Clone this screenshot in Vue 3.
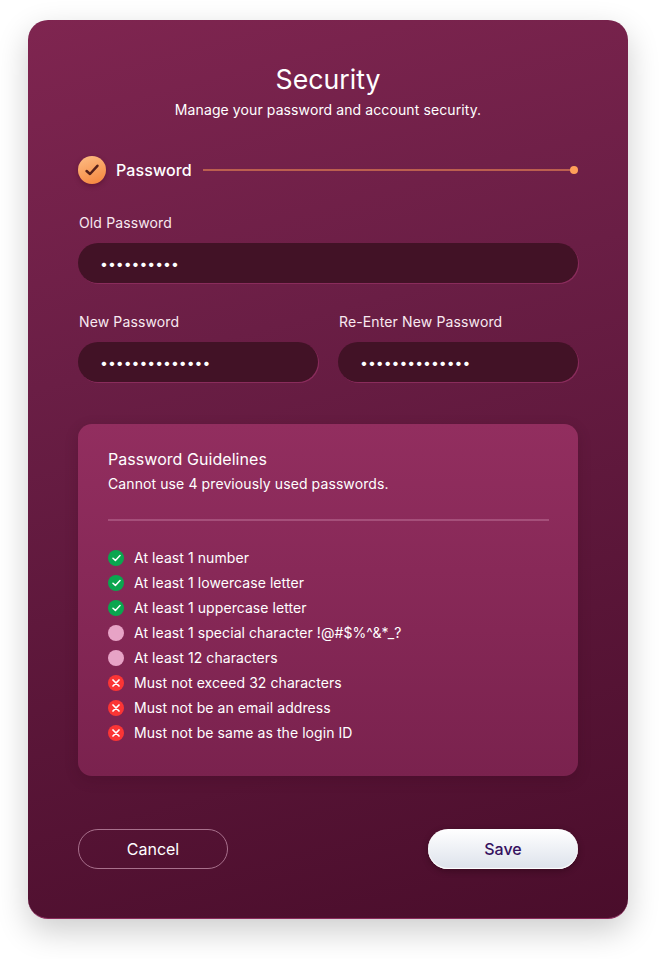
<template>
  <div class="page">
    <div class="card">
      <h1 class="title">Security</h1>
      <p class="subtitle">Manage your password and account security.</p>

      <div class="step">
        <span class="step-badge">
          <svg width="14" height="12" viewBox="0 0 14 12" fill="none">
            <path d="M1.6 7 L5 10 L12.4 1.8" stroke="#55201a" stroke-width="2.5" stroke-linecap="round" stroke-linejoin="round" />
          </svg>
        </span>
        <span class="step-name">Password</span>
        <span class="step-line"></span>
      </div>

      <label class="field">
        <span class="field-label">Old Password</span>
        <input class="field-input" type="password" value="abcdefghij" readonly />
      </label>

      <div class="field-row">
        <label class="field" v-for="f in newFields" :key="f">
          <span class="field-label">{{ f }}</span>
          <input class="field-input" type="password" value="abcdefghijklmn" readonly />
        </label>
      </div>

      <div class="guide">
        <h2 class="guide-title">Password Guidelines</h2>
        <p class="guide-sub">Cannot use 4 previously used passwords.</p>
        <div class="guide-rule"></div>
        <ul class="guide-list">
          <li v-for="r in rules" :key="r.text" class="guide-item">
            <span class="dot" :class="r.state">
              <svg v-if="r.state === 'ok'" width="9" height="8" viewBox="0 0 9 8" fill="none">
                <path d="M1 4.2 L3.4 6.4 L8 1.6" stroke="#fff" stroke-width="1.5" stroke-linecap="round" stroke-linejoin="round" />
              </svg>
              <svg v-if="r.state === 'bad'" width="8" height="8" viewBox="0 0 8 8" fill="none">
                <path d="M1 1 L7 7 M7 1 L1 7" stroke="#fff" stroke-width="1.7" stroke-linecap="round" />
              </svg>
            </span>
            <span>{{ r.text }}</span>
          </li>
        </ul>
      </div>

      <div class="actions">
        <button class="btn btn-cancel">Cancel</button>
        <button class="btn btn-save">Save</button>
      </div>
    </div>
  </div>
</template>

<script setup>
const newFields = ['New Password', 'Re-Enter New Password']

const rules = [
  { text: 'At least 1 number', state: 'ok' },
  { text: 'At least 1 lowercase letter', state: 'ok' },
  { text: 'At least 1 uppercase letter', state: 'ok' },
  { text: 'At least 1 special character !@#$%^&*_?', state: 'idle' },
  { text: 'At least 12 characters', state: 'idle' },
  { text: 'Must not exceed 32 characters', state: 'bad' },
  { text: 'Must not be an email address', state: 'bad' },
  { text: 'Must not be same as the login ID', state: 'bad' }
]
</script>

<style>
html,
body {
  background: #fff;
}
</style>

<style scoped>
.page {
  width: 660px;
  height: 959px;
  box-sizing: border-box;
  padding: 20px 32px 40px 28px;
  font-family: Inter, "Liberation Sans", sans-serif;
  overflow: hidden;
}

.card {
  width: 600px;
  height: 899px;
  box-sizing: border-box;
  padding: 43px 50px 0;
  border-radius: 20px;
  border-bottom: 1px solid #8a2c5c;
  background: linear-gradient(165deg, #7f2550 0%, #6a1e45 35%, #4a0d2b 100%);
  box-shadow: 0 12px 32px rgba(0, 0, 0, 0.2);
  color: #fff;
}

.title {
  margin: 0;
  font-size: 26.7px;
  line-height: 32px;
  font-weight: 400;
  text-align: center;
}

.subtitle {
  margin: 5px 0 0;
  font-size: 14px;
  line-height: 20px;
  letter-spacing: 0.1px;
  text-align: center;
}

.step {
  display: flex;
  align-items: center;
  margin-top: 36px;
  height: 28px;
}

.step-badge {
  width: 28px;
  height: 28px;
  border-radius: 50%;
  display: flex;
  align-items: center;
  justify-content: center;
  background: linear-gradient(160deg, #fdbd85 0%, #f5843a 100%);
  box-shadow: 0 2px 5px rgba(60, 0, 20, 0.35);
}

.step-name {
  margin-left: 10px;
  font-size: 16px;
  font-weight: 500;
  letter-spacing: 0.1px;
}

.step-line {
  flex: 1;
  height: 2px;
  margin-left: 11px;
  margin-right: 4px;
  background: #bb5f4f;
  position: relative;
}

.step-line::after {
  content: "";
  position: absolute;
  right: -4px;
  top: -3px;
  width: 8px;
  height: 8px;
  border-radius: 50%;
  background: #ff9f59;
}

.field {
  display: block;
  margin-top: 29px;
}

.field-label {
  display: block;
  padding-left: 1px;
  font-size: 14px;
  line-height: 20px;
  letter-spacing: 0.13px;
  color: #f8e9f0;
}

.field-input {
  display: block;
  width: 100%;
  height: 40px;
  box-sizing: border-box;
  margin-top: 10px;
  padding: 0 22px;
  border: none;
  outline: none;
  border-radius: 20px;
  background: #421226;
  box-shadow: 1px 1px 0 #8a2c5c;
  color: #fff;
  font-family: Inter, "Liberation Sans", sans-serif;
  font-size: 14px;
}

.field-row {
  display: grid;
  grid-template-columns: 240px 240px;
  gap: 20px;
}

.guide {
  margin-top: 42px;
  height: 352px;
  box-sizing: border-box;
  padding: 25px 29px 0 30px;
  border-radius: 14px;
  background: linear-gradient(180deg, #922e5f 0%, #7a224e 100%);
  box-shadow: 0 4px 14px rgba(50, 0, 25, 0.2);
}

.guide-title {
  margin: 0;
  font-size: 16px;
  line-height: 20px;
  font-weight: 400;
  letter-spacing: 0.05px;
}

.guide-sub {
  margin: 5px 0 0;
  font-size: 14px;
  line-height: 20px;
  letter-spacing: 0.1px;
}

.guide-rule {
  height: 2px;
  margin-top: 25px;
  background: #a54f7a;
}

.guide-list {
  list-style: none;
  margin: 24px 0 0;
  padding: 0;
}

.guide-item {
  display: flex;
  align-items: center;
  gap: 10px;
  height: 25px;
  font-size: 14px;
  letter-spacing: 0.07px;
}

.dot {
  width: 16px;
  height: 16px;
  border-radius: 50%;
  display: flex;
  align-items: center;
  justify-content: center;
  flex: none;
}

.dot.ok {
  background: #0aa64f;
}

.dot.idle {
  background: #e7a3c6;
}

.dot.bad {
  background: #fb3535;
}

.actions {
  display: flex;
  justify-content: space-between;
  margin-top: 53px;
}

.btn {
  width: 150px;
  height: 40px;
  border-radius: 20px;
  font-family: Inter, "Liberation Sans", sans-serif;
  font-size: 16px;
}

.btn-cancel {
  background: transparent;
  border: 1px solid #a8708c;
  color: #fff;
}

.btn-save {
  border: none;
  background: linear-gradient(180deg, #ffffff 0%, #dde2eb 100%);
  box-shadow: 0 2px 6px rgba(30, 0, 15, 0.4), inset 0 -1px 1px #fff, inset 0 0 2px #fff;
  color: #35105f;
  font-weight: 500;
}
</style>
